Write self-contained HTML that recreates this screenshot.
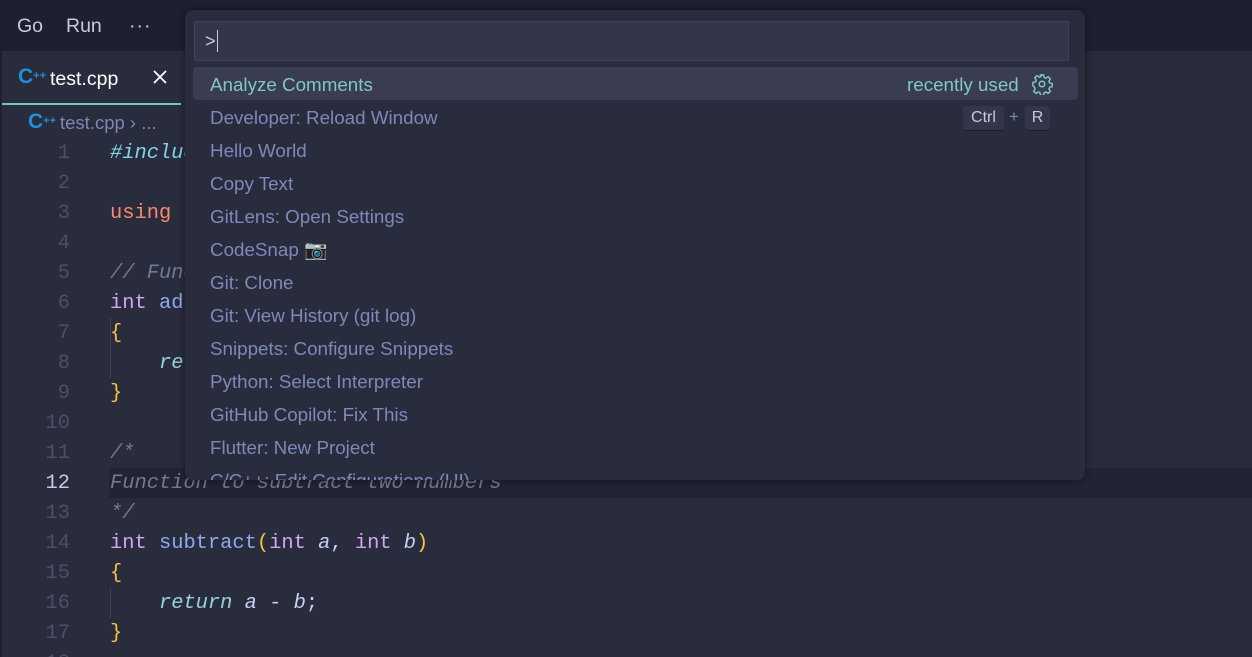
<!DOCTYPE html><html><head><style>
html,body{margin:0;width:1252px;height:657px;overflow:hidden}
body{background:#292c3c;font-family:"Liberation Sans",sans-serif;position:relative}
.title{position:absolute;left:0;top:0;width:1252px;height:51px;background:#1e2030;color:#c6cbe0;font-size:19.5px}
.title span{position:absolute;top:15px}
.tab{position:absolute;left:2px;top:51px;width:179px;height:52px;border-bottom:2px solid #71c9c0;background:#292c3c}
.ed{position:absolute;left:0;top:0;width:2px;height:657px;background:#1e2030}
.code{position:absolute;font-family:"Liberation Mono",monospace;font-size:20.4px;white-space:pre;line-height:30px}
.ln{position:absolute;left:20px;width:50px;text-align:right;color:#4b5068}
.pal{position:absolute;left:185px;top:10px;width:900px;height:470px;background:#292c3c;border-radius:8px;box-shadow:0 0 8px rgba(0,0,0,.5);overflow:hidden}
.inp{position:absolute;left:9px;top:11px;width:873px;height:38px;border:1px solid #3f4356;background:#33364a;border-radius:2px}
.it{position:absolute;left:25px;height:33px;line-height:35px;font-size:18.8px;color:#7f88ba;white-space:nowrap}
.kb{position:absolute;top:96px;height:24px;line-height:24px;background:#33364a;border-radius:3px;color:#c6cbe0;font-size:16px;text-align:center;box-shadow:0 1px 0 #1e2030}
</style></head><body>
<div class="ed"></div>
<div class="title"><span style="left:17px">Go</span><span style="left:66px">Run</span><span style="left:129px;letter-spacing:1px">···</span></div>
<div class="tab">
<span style="position:absolute;left:16px;top:14px;color:#1e90d6;font-weight:bold;font-size:21px">C<span style="font-size:11px;position:relative;top:-4px">++</span></span>
<span style="position:absolute;left:48px;top:17px;color:#fff;font-size:19.5px">test.cpp</span>
<svg style="position:absolute;left:151px;top:19px" width="14" height="14" viewBox="0 0 14 14" stroke="#fff" stroke-width="1.8"><path d="M1 1L13 13M13 1L1 13"/></svg></div>
<span style="position:absolute;left:28px;top:110px;color:#1e90d6;font-weight:bold;font-size:21px">C<span style="font-size:11px;position:relative;top:-4px">++</span></span>
<span style="position:absolute;left:60px;top:112px;color:#7e86b4;font-size:18.5px">test.cpp › ...</span>
<div style="position:absolute;left:109px;top:468px;width:1143px;height:30px;background:#222433"></div>
<div style="position:absolute;left:110px;top:318px;width:1px;height:60px;background:#3f4356"></div>
<div style="position:absolute;left:110px;top:588px;width:1px;height:30px;background:#3f4356"></div>
<div class="code ln" style="top:139px">1
2
3
4
5
6
7
8
9
10
11
<span style="color:#c6cbe0">12</span>
13
14
15
16
17
18</div>
<div class="code" style="left:110px;top:139px;color:#c6d0f5"><i style="color:#7fd6ec">#include</i>

<span style="color:#fa8a6a">using</span>

<i style="color:#737994">// Function</i>
<span style="color:#d4a5f5">int</span> <span style="color:#8caaee">add</span>
<span style="color:#f5c542">{</span>
    <i style="color:#99d1db">return</i>
<span style="color:#f5c542">}</span>

<i style="color:#737994">/*</i>
<i style="color:#737994">Function to subtract two numbers</i>
<i style="color:#737994">*/</i>
<span style="color:#d4a5f5">int</span> <span style="color:#8caaee">subtract</span><span style="color:#f5c542">(</span><span style="color:#d4a5f5">int</span> <i>a</i>, <span style="color:#d4a5f5">int</span> <i>b</i><span style="color:#f5c542">)</span>
<span style="color:#f5c542">{</span>
    <i style="color:#99d1db">return</i> <i>a</i> - <i>b</i>;
<span style="color:#f5c542">}</span></div>
<div class="pal">
<div class="inp"><span style="position:absolute;left:10px;top:9px;color:#c6cbe0;font-size:18px">&gt;</span><span style="position:absolute;left:22px;top:8px;width:1px;height:22px;background:#c6cbe0"></span></div>
<div style="position:absolute;left:8px;top:57px;width:885px;height:33px;background:#3a3d52;border-radius:4px"></div>
<div class="it" style="top:57px;color:#81c8be">Analyze Comments</div>
<div class="it" style="top:57px;left:722px;color:#81c8be">recently used</div>
<svg style="position:absolute;left:846px;top:63px" width="22" height="22" viewBox="0 0 24 24" fill="none" stroke="#81c8be" stroke-width="1.6"><circle cx="12" cy="12" r="3"/><path d="M10.3 2h3.4l.6 2.9 1.9.8 2.5-1.6 2.4 2.4-1.6 2.5.8 1.9 2.9.6v3.4l-2.9.6-.8 1.9 1.6 2.5-2.4 2.4-2.5-1.6-1.9.8-.6 2.9h-3.4l-.6-2.9-1.9-.8-2.5 1.6-2.4-2.4 1.6-2.5-.8-1.9L2 13.7v-3.4l2.9-.6.8-1.9-1.6-2.5 2.4-2.4 2.5 1.6 1.9-.8z"/></svg>
<div class="it" style="top:90px">Developer: Reload Window</div>
<div class="kb" style="left:778px;width:41px">Ctrl</div>
<span style="position:absolute;left:824px;top:97px;color:#7e86b4;font-size:17px">+</span>
<div class="kb" style="left:840px;width:25px">R</div>
<div class="it" style="top:123px">Hello World</div>
<div class="it" style="top:156px">Copy Text</div>
<div class="it" style="top:189px">GitLens: Open Settings</div>
<div class="it" style="top:222px">CodeSnap 📷</div>
<div class="it" style="top:255px">Git: Clone</div>
<div class="it" style="top:288px">Git: View History (git log)</div>
<div class="it" style="top:321px">Snippets: Configure Snippets</div>
<div class="it" style="top:354px">Python: Select Interpreter</div>
<div class="it" style="top:387px">GitHub Copilot: Fix This</div>
<div class="it" style="top:420px">Flutter: New Project</div>
<div class="it" style="top:453px">C/C++: Edit Configurations (UI)</div>
</div>
</body></html>
